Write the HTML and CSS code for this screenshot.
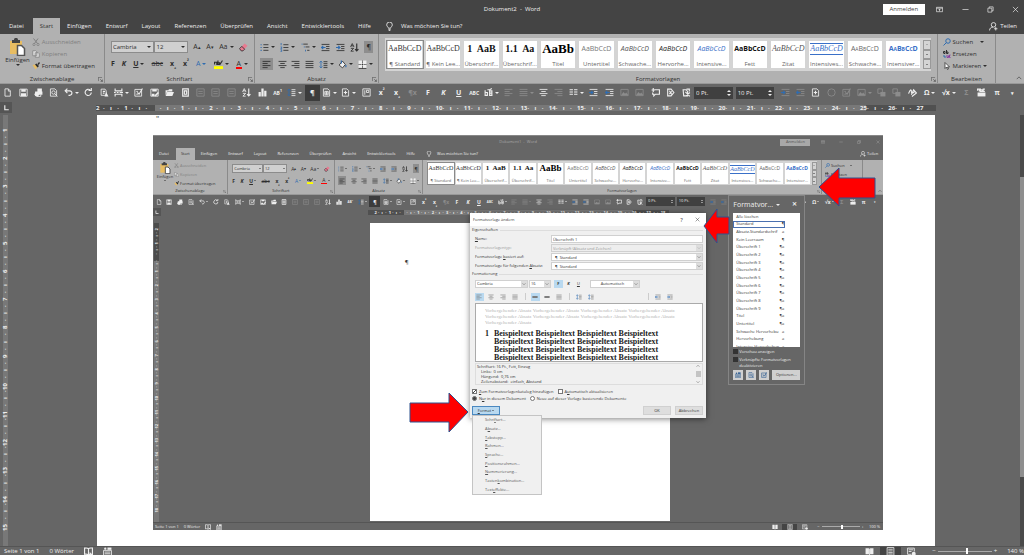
FILE: index.html
```html
<!DOCTYPE html>
<html lang="de">
<head>
<meta charset="utf-8">
<title>Dokument2 - Word</title>
<link rel="stylesheet" href="styles.css">
</head>
<body>
<svg class="sprite" aria-hidden="true">
  <symbol id="new" viewBox="0 0 16 16"><path d="M3.5 1.5h6l3.5 3.5v9.5h-9.5zM9.500 1.500v4h3.500"/></symbol>
  <symbol id="save" viewBox="0 0 16 16"><path d="M1.500 2h13v12.500h-13z"/><path class="f" d="M4 2h8v4.500H4zM3.500 9.500h9v5h-9z"/></symbol>
  <symbol id="print" viewBox="0 0 16 16"><path class="f" d="M6 1h8v5H6zM2 6h13v6H2z"/><path d="M5 12v3h7v-3"/><circle class="f" cx="5" cy="11" r="4"/></symbol>
  <symbol id="preview" viewBox="0 0 16 16"><path d="M2.500 1.500h8l3 3v10h-11z"/><circle cx="8" cy="8" r="3"/><path d="M10 10l5 5"/></symbol>
  <symbol id="undo" viewBox="0 0 16 16"><path class="w" d="M2 5h8c6 0 5 8 0 8H8M6 1L2 5l4 4"/></symbol>
  <symbol id="redo" viewBox="0 0 16 16"><path class="w" d="M13 8a5.500 5.500 0 1 1-2-4.500M8 4.500h5V0"/></symbol>
  <symbol id="pasteas" viewBox="0 0 16 16"><path d="M2 2h7l2 3v8H2z"/><path class="w" d="M5 6h4M5 9h3"/><path class="f" d="M8 15l3-8 4 8z"/></symbol>
  <symbol id="break" viewBox="0 0 16 16"><path class="w" d="M2 1v4h12V1M2 15v-4h12v4M0 8h3M5 8h3M10 8h6"/></symbol>
  <symbol id="check" viewBox="0 0 16 16"><path d="M1.500 2.500h12v12h-12zM4 6h3M4 11h3"/><path class="w" d="M6 8l3 3 6-10"/></symbol>
  <symbol id="saveas" viewBox="0 0 16 16"><path d="M1.500 2h13v12.500h-13z"/><path class="f" d="M4 2h8v4H4zM3 10h5v4H3zM8 13l6-6 2 2-6 6z"/></symbol>
  <symbol id="open" viewBox="0 0 16 16"><path class="f" d="M1 4h5l1-2h6v4H4l-3 7zM4 7h12l-3 7H1z"/></symbol>
  <symbol id="page" viewBox="0 0 16 16"><path class="w" d="M3 1.500h10v13H3zM6 5h4v6H6z"/></symbol>
  <symbol id="frame" viewBox="0 0 16 16"><path d="M1.500 1.500h13v13h-13zM4 6h8M4 10h8"/></symbol>
  <symbol id="sort" viewBox="0 0 16 16"><path d="M1 7l3-6 3 6M2 5h4M1.500 9.500h5l-5 5h5"/><path class="w" d="M12 1v13M9 11l3 3 3-3"/></symbol>
  <symbol id="chart" viewBox="0 0 16 16"><path class="f" d="M1 7h4v8H1zM6 1h4v14H6zM11 5h4v10h-4z"/></symbol>
  <symbol id="spacing" viewBox="0 0 16 16"><path class="b" d="M3.500 2v12M1 4.500L3.500 2 6 4.500M1 11.500L3.500 14 6 11.500"/><path d="M8 3h7M8 6.500h7M8 10h7M8 13.500h7"/></symbol>
  <symbol id="grid" viewBox="0 0 16 16"><path d="M2.500 1.500h8l3 3v10h-11zM5 6h6v6H5zM8 6v6M5 9h6"/></symbol>
  <symbol id="docplus" viewBox="0 0 16 16"><path d="M2.500 1.500h8l3 3v10h-11z"/><path class="w" d="M8 5v6M5 8h6"/></symbol>
  <symbol id="box" viewBox="0 0 16 16"><path d="M1.500 1.500h13v13h-13zM5 4v8M8 4v4h4V4z"/></symbol>
  <symbol id="left" viewBox="0 0 16 16"><path d="M1 2.500h14M1 6.200h9M1 9.900h14M1 13.500h9"/></symbol>
  <symbol id="center" viewBox="0 0 16 16"><path d="M1 2.500h14M4 6.200h8M1 9.900h14M4 13.500h8"/></symbol>
  <symbol id="right" viewBox="0 0 16 16"><path d="M1 2.500h14M6 6.200h9M1 9.900h14M6 13.500h9"/></symbol>
  <symbol id="just" viewBox="0 0 16 16"><path d="M1 2.500h14M1 6.200h14M1 9.900h14M1 13.500h14"/></symbol>
  <symbol id="cols" viewBox="0 0 16 16"><path class="w" d="M1 3h6M9 3h6M1 7h6M9 7h6M1 11h6M9 11h6"/></symbol>
  <symbol id="outdent" viewBox="0 0 16 16"><path d="M1 2.500h14M9 6.200h6M9 9.900h6M1 13.500h14"/><path class="b w" d="M8 8H1M4 5L1 8l3 3"/></symbol>
  <symbol id="indent" viewBox="0 0 16 16"><path d="M1 2.500h14M9 6.200h6M9 9.900h6M1 13.500h14"/><path class="b w" d="M0 8h7M4 5l3 3-3 3"/></symbol>
  <symbol id="image" viewBox="0 0 16 16"><path d="M1.500 2.500h13v11h-13z"/><path class="f" d="M2 13l4-6 3 3 2-2 4 5z"/></symbol>
  <symbol id="comment" viewBox="0 0 16 16"><path class="w" d="M6 3h9v8H8l-3 3v-3H3V8M4 0v7M1 3.500h6"/></symbol>
  <symbol id="tag" viewBox="0 0 16 16"><path class="w" d="M3 2h6l5 6-5 6H3zM6 5l4 6M10 6l-4 5"/></symbol>
  <symbol id="copyfmt" viewBox="0 0 16 16"><path class="w" d="M2 3h5l3 3v8H3zM8 2h5v4M6 7l8 8M14 8l-7 6"/></symbol>
  <symbol id="circle" viewBox="0 0 16 16"><circle cx="8" cy="8" r="6.500"/></symbol>
  <symbol id="group" viewBox="0 0 16 16"><path d="M1.500 1.500h8v8h-8z"/><path class="f" d="M6 7h9v8H6z"/></symbol>
  <symbol id="spell" viewBox="0 0 16 16"><path class="w" d="M1 10c3-8 5-8 5-4s2 5 6 0M6 12l4-9 5 6-8 6"/></symbol>
  <symbol id="bformat" viewBox="0 0 16 16"><path class="w" d="M2 4v9h4V8H2M10 5h4v8h-4zM10 9h4M6 3h4l4-2"/></symbol>
  <symbol id="abc" viewBox="0 0 16 16"><path class="f" d="M1 8h14v7H1z"/><path class="w" d="M1 5V2h3v4M6 1v5h3V3H6M14 2h-3v4h3"/></symbol>
  <symbol id="tabstop" viewBox="0 0 16 16"><path class="w" d="M5 4v8h7"/></symbol>
  <symbol id="bulb" viewBox="0 0 16 16"><path d="M6 11c0-2-3-3-3-6a5 5 0 0 1 10 0c0 3-3 4-3 6zM6 13h4M6.500 15h3"/></symbol>
  <symbol id="person" viewBox="0 0 16 16"><circle cx="8" cy="5" r="4"/><path d="M1 15c0-4 3-6 6-6M9 12h6M12 9v6"/></symbol>
  <symbol id="paste" viewBox="0 0 16 18"><path fill="#e8bd62" stroke="none" d="M1 3h12v13H1z"/><path fill="#444" stroke="none" d="M3 2h2c0-3 4-3 4 0h2v3H3z"/><path fill="#fff" stroke="#555" d="M8.500 7.500h4l3 3v7h-7z"/></symbol>
  <symbol id="cut" viewBox="0 0 16 16"><path class="w" d="M3 1l8 10M12 1L5 11"/><circle cx="4" cy="13" r="2.300"/><circle cx="12" cy="13" r="2.300"/></symbol>
  <symbol id="copy" viewBox="0 0 16 16"><path fill="#ddd" d="M1.500 1.500h6l2 2v8h-8zM6.500 5.500h6l2 2v7h-8z"/></symbol>
  <symbol id="brush" viewBox="0 0 16 16"><path fill="#e8bd62" stroke="none" d="M1 6l5-1 5 5-4 5z"/><path class="f" d="M6 5l3-2 5 5-3 3zM11 4l3-4 2 2-3 4z"/></symbol>
  <symbol id="eraser" viewBox="0 0 16 16"><path fill="#e87a90" stroke="none" d="M1 10l9-9 5 4-8 9H4z"/><path d="M1 10l3 4h3l3-3-5-5z"/></symbol>
  <symbol id="bullets" viewBox="0 0 16 16"><path class="b w" d="M1 3h2M1 8h2M1 13h2"/><path d="M6 3h9M6 8h9M6 13h9"/></symbol>
  <symbol id="numbers" viewBox="0 0 16 16"><path class="b" d="M2 0v4M1 7h2v3H1M1 12h2v3H1"/><path d="M6 3h9M6 8h9M6 13h9"/></symbol>
  <symbol id="levels" viewBox="0 0 16 16"><path class="b" d="M1 2h2M5 7h2M8 12v3"/><path d="M4 2h8M8 7h7M11 13h4"/></symbol>
  <symbol id="fill" viewBox="0 0 16 16"><path fill="#eee" d="M2 9l6-7 5 6-5 6z"/><path class="b w" d="M14 9v4M6 1v5"/></symbol>
  <symbol id="borders" viewBox="0 0 16 16"><path fill="#eee" stroke="none" d="M1 1h14v14H1z"/><path stroke-dasharray="2 1" d="M8 1v14M1 8h14"/><path d="M1 15h14"/></symbol>
  <symbol id="marker" viewBox="0 0 16 16"><path fill="#ffff00" stroke="none" d="M0 11h16v5H0z"/><path class="w" d="M1 8V4h4v5M7 1v7h3V5H7M10 9l5-8"/></symbol>
  <symbol id="find" viewBox="0 0 16 16"><circle class="b w" cx="10" cy="6" r="4.500"/><path class="b w" d="M7 9l-6 6"/></symbol>
  <symbol id="swap" viewBox="0 0 16 16"><path class="w" d="M1 6V3h3v4H1M7 0v7h3V4H7"/><path class="b w" d="M2 10v4h4"/><path stroke="#8a3fa0" class="w" d="M8 10v5h3v-4M15 10h-2v5h2"/></symbol>
  <symbol id="cursor" viewBox="0 0 16 16"><path fill="#fff" d="M4 1v12l3-3 2 5 2-1-2-4h4z"/></symbol>
  <symbol id="launch" viewBox="0 0 16 16"><path d="M1 13V1h12M7 7l7 7M14 8v6H8"/></symbol>
  <symbol id="ribbonopt" viewBox="0 0 16 16"><path d="M1 3h14v10H1zM1 5h14M8 12V7M6 9l2-2 2 2"/></symbol>
  <symbol id="min" viewBox="0 0 16 16"><path d="M1 8h14"/></symbol>
  <symbol id="max" viewBox="0 0 16 16"><path d="M2 5h9v9H2zM5 5V2h9v9h-3"/></symbol>
  <symbol id="close" viewBox="0 0 16 16"><path d="M2 2l12 12M14 2L2 14"/></symbol>
  <symbol id="chev" viewBox="0 0 16 16"><path d="M2 5l6 6 6-6"/></symbol>
  <symbol id="up" viewBox="0 0 16 16"><path d="M2 11l6-6 6 6"/></symbol>
  <symbol id="book" viewBox="0 0 16 16"><path class="w" d="M8 3C5 1 2 2 1 2v11c3-1 5 0 7 1 2-1 4-2 7-1V2c-2 0-5-1-7 1zM8 3v11M10 10l5 5"/></symbol>
  <symbol id="read" viewBox="0 0 16 16"><path class="f" d="M1 2h6v11H1zM9 2h6v11H9z"/><path d="M8 3v12"/></symbol>
  <symbol id="layout" viewBox="0 0 16 16"><path d="M2 1h12v14H2zM4 4h8M4 7h8M4 10h8M4 12.500h8"/></symbol>
  <symbol id="web" viewBox="0 0 16 16"><path d="M1 2h12v6M1 2v11h7M3 5h8M3 8h5"/><circle class="f" cx="12" cy="12" r="3.500"/></symbol>
  <symbol id="macro" viewBox="0 0 16 16"><circle class="f" cx="4" cy="3" r="2"/><path class="f" d="M8 1h7v4H8z"/><path d="M1 6h14v9H1zM3 9h10M3 12h10"/></symbol>
</svg>

<template id="head">
  <header class="title"><span class="name"></span>
    <button class="login">Anmelden</button>
    <div class="wbtns">
      <button aria-label="Menüband-Anzeigeoptionen"><svg><use href="#ribbonopt"/></svg></button>
      <button aria-label="Minimieren"><svg><use href="#min"/></svg></button>
      <button aria-label="Verkleinern"><svg><use href="#max"/></svg></button>
      <button aria-label="Schließen"><svg><use href="#close"/></svg></button>
    </div>
  </header>
  <nav class="tabs">
    <button>Datei</button><button class="on">Start</button><button>Einfügen</button><button>Entwurf</button><button>Layout</button><button>Referenzen</button><button>Überprüfen</button><button>Ansicht</button><button>Entwicklertools</button><button>Hilfe</button><button class="tell"><svg><use href="#bulb"/></svg>Was möchten Sie tun?</button>
    <button class="share"><svg><use href="#person"/></svg>Teilen</button>
  </nav>
  <div class="ribbon">
    <section class="group">
      <div class="clip">
        <button class="big"><svg><use href="#paste"/></svg>Einfügen<i class="dd"></i></button>
        <div class="stack">
          <button class="off"><svg><use href="#cut"/></svg>Ausschneiden</button>
          <button class="off"><svg><use href="#copy"/></svg>Kopieren</button>
          <button><svg><use href="#brush"/></svg>Format übertragen</button>
        </div>
      </div>
      <footer>Zwischenablage<svg><use href="#launch"/></svg></footer>
    </section>
    <section class="group">
      <div class="rows">
        <div class="line">
          <div class="combos"><label class="pick wide"><select aria-label="Schriftart"><option>Cambria</option></select><i class="dd"></i></label><label class="pick"><select aria-label="Schriftgrad"><option>12</option></select><i class="dd"></i></label></div>
          <button>A<sup>▴</sup></button><button>A<sup>▾</sup></button><button>Aa<i class="dd"></i></button><button aria-label="Formatierung löschen"><svg><use href="#eraser"/></svg></button>
        </div>
        <div class="line">
          <button><b>F</b></button><button><b><em>K</em></b></button><button><b><u>U</u></b><i class="dd"></i></button><button><s>abc</s></button><button><b>x<sub>₂</sub></b></button><button><b>x<sup>²</sup></b></button><button class="glow">A<i class="dd"></i></button><button aria-label="Texthervorhebung"><svg><use href="#marker"/></svg><i class="dd"></i></button><button><span class="red">A</span><i class="dd"></i></button>
        </div>
      </div>
      <footer>Schriftart<svg><use href="#launch"/></svg></footer>
    </section>
    <section class="group">
      <div class="rows">
        <div class="line">
          <button aria-label="Aufzählung"><svg><use href="#bullets"/></svg><i class="dd"></i></button><button aria-label="Nummerierung"><svg><use href="#numbers"/></svg><i class="dd"></i></button><button aria-label="Liste"><svg><use href="#levels"/></svg><i class="dd"></i></button><button aria-label="Einzug verkleinern"><svg><use href="#outdent"/></svg></button><button aria-label="Einzug vergrößern"><svg><use href="#indent"/></svg></button><button aria-label="Sortieren"><svg><use href="#sort"/></svg></button><button class="on">¶</button>
        </div>
        <div class="line">
          <button class="on" aria-label="Linksbündig"><svg><use href="#left"/></svg></button><button aria-label="Zentriert"><svg><use href="#center"/></svg></button><button aria-label="Rechtsbündig"><svg><use href="#right"/></svg></button><button aria-label="Blocksatz"><svg><use href="#just"/></svg></button><button aria-label="Zeilenabstand"><svg><use href="#spacing"/></svg><i class="dd"></i></button><button aria-label="Schattierung"><svg><use href="#fill"/></svg><i class="dd"></i></button><button aria-label="Rahmen"><svg><use href="#borders"/></svg><i class="dd"></i></button>
        </div>
      </div>
      <footer>Absatz<svg><use href="#launch"/></svg></footer>
    </section>
    <section class="group">
      <div class="gallery">
        <button class="tile on"><span class="pv serif">AaBbCcD</span>¶ Standard</button>
        <button class="tile"><span class="pv serif">AaBbCcD</span>¶ Kein Lee...</button>
        <button class="tile"><span class="pv h">1&nbsp; AaB</span>Überschrif...</button>
        <button class="tile"><span class="pv h">1.1&nbsp; Aa</span>Überschrif...</button>
        <button class="tile"><span class="pv t">AaBb</span>Titel</button>
        <button class="tile"><span class="pv gray">AaBbCcD</span>Untertitel</button>
        <button class="tile"><span class="pv it">AaBbCcD</span>Schwache...</button>
        <button class="tile"><span class="pv it dark">AaBbCcD</span>Hervorhe...</button>
        <button class="tile"><span class="pv it blue">AaBbCcD</span>Intensive...</button>
        <button class="tile"><span class="pv bold">AaBbCcD</span>Fett</button>
        <button class="tile"><span class="pv serif it">AaBbCcD</span>Zitat</button>
        <button class="tile"><span class="pv serif it blue lined">AaBbCcD</span>Intensives...</button>
        <button class="tile"><span class="pv caps">AaBbCcD</span>Schwache...</button>
        <button class="tile"><span class="pv caps bold blue">AaBbCcD</span>Intensiver...</button>
        <div class="scroller"><button aria-label="Nach oben" class="off"><i class="dd flip"></i></button><button aria-label="Nach unten"><i class="dd"></i></button><button aria-label="Mehr"><i class="dd"></i></button></div>
      </div>
      <footer>Formatvorlagen<svg><use href="#launch"/></svg></footer>
    </section>
    <section class="group">
      <div class="stack edit">
        <button><svg><use href="#find"/></svg>Suchen <i class="dd far"></i></button>
        <button><svg><use href="#swap"/></svg>Ersetzen</button>
        <button><svg><use href="#cursor"/></svg>Markieren<i class="dd"></i></button>
      </div>
      <footer>Bearbeiten</footer>
    </section>
    <section class="group last"><button aria-label="Menüband reduzieren"><svg><use href="#up"/></svg></button></section>
  </div>
  <div class="qat"></div>
</template>

<template id="foot">
  <footer class="status"><span>Seite 1 von 1</span><span>0 Wörter</span><svg><use href="#book"/></svg><svg><use href="#macro"/></svg>
    <div class="views"><button aria-label="Lesemodus"><svg><use href="#read"/></svg></button><button class="on" aria-label="Seitenlayout"><svg><use href="#layout"/></svg></button><button aria-label="Weblayout"><svg><use href="#web"/></svg></button></div>
    <div class="zoom"><span>−</span><input type="range" aria-label="Zoom" min="0" max="100" value="55"><span>+</span></div><span class="pct"></span>
  </footer>
</template>

<main class="word outer" data-name="Dokument2  -  Word" data-zoom="140 %" data-cm="27" data-v="15">
  <div class="desk">
    <div class="page">
      <div class="mark">"</div>
      <div class="shot">
        <div class="word inner" data-name="Dokument1  -  Word" data-zoom="100 %" data-cm="18" data-v="18">
          <div class="desk"><div class="page"><p>¶</p></div></div>
        </div>

        <aside class="pane">
          <h2>Formatvor... <i class="dd"></i><button aria-label="Schließen"><b>✕</b></button></h2>
          <ul>
            <li>Alle löschen</li><li class="on">Standard<span>¶</span></li><li>Absatz-Standardschrif<span>a</span></li><li>Kein Leerraum<span>¶</span></li>
            <li>Überschrift 1<span>¶a</span></li><li>Überschrift 2<span>¶a</span></li><li>Überschrift 3<span>¶a</span></li><li>Überschrift 4<span>¶a</span></li><li>Überschrift 5<span>¶a</span></li><li>Überschrift 6<span>¶a</span></li><li>Überschrift 7<span>¶a</span></li><li>Überschrift 8<span>¶a</span></li><li>Überschrift 9<span>¶a</span></li>
            <li>Titel<span>¶a</span></li><li>Untertitel<span>¶a</span></li><li>Schwache Hervorhebu<span>a</span></li><li>Hervorhebung<span>a</span></li><li>Intensive Hervorhebun<span>a</span></li>
          </ul>
          <label><input type="checkbox">Vorschau anzeigen</label>
          <label><input type="checkbox">Verknüpfte Formatvorlagen deaktivieren</label>
          <div class="acts"><button aria-label="Neue Formatvorlage"><svg><use href="#macro"/></svg></button><button aria-label="Formatinspektor"><svg><use href="#preview"/></svg></button><button aria-label="Formatvorlagen verwalten"><svg><use href="#check"/></svg></button><button class="opt">Optionen...</button></div>
        </aside>

        <form class="dialog" aria-label="Formatvorlage ändern">
          <header>Formatvorlage ändern<span>?</span><svg><use href="#close"/></svg></header>
          <h3>Eigenschaften</h3>
          <div class="fields">
            <label for="nm"><u>N</u>ame:</label><div class="pick"><input id="nm" value="Überschrift 1"></div>
            <label for="ty" class="off">Formatvorlagentyp:</label><div class="pick off"><select id="ty" disabled><option>Verknüpft (Absatz und Zeichen)</option></select><svg><use href="#chev"/></svg></div>
            <label for="ba">Formatvorlage <u>b</u>asiert auf:</label><div class="pick"><select id="ba"><option>&nbsp; ¶&nbsp; Standard</option></select><svg><use href="#chev"/></svg></div>
            <label for="fo">Formatvorlage für folgenden <u>A</u>bsatz:</label><div class="pick"><select id="fo"><option>&nbsp; ¶&nbsp; Standard</option></select><svg><use href="#chev"/></svg></div>
          </div>
          <h3>Formatierung</h3>
          <div class="fmt">
            <div class="pick f1"><select aria-label="Schriftart"><option>Cambria</option></select><svg><use href="#chev"/></svg></div>
            <div class="pick f2"><select aria-label="Schriftgrad"><option>16</option></select><svg><use href="#chev"/></svg></div>
            <button type="button" class="on"><b>F</b></button><button type="button"><b><em>K</em></b></button><button type="button"><u>U</u></button>
            <div class="pick f3"><select aria-label="Schriftfarbe"><option>Automatisch</option></select><svg><use href="#chev"/></svg></div>
          </div>
          <div class="fmt aligns">
            <button type="button" class="on" aria-label="Linksbündig"><svg><use href="#left"/></svg></button><button type="button" aria-label="Zentriert"><svg><use href="#center"/></svg></button><button type="button" aria-label="Rechtsbündig"><svg><use href="#right"/></svg></button><button type="button" aria-label="Blocksatz"><svg><use href="#just"/></svg></button>
            <hr><button type="button" class="on" aria-label="Einfach"><svg class="hv"><use href="#min"/></svg></button><button type="button" aria-label="Eineinhalb"><svg class="hv"><use href="#min"/></svg></button><button type="button" aria-label="Doppelt"><svg><use href="#just"/></svg></button>
            <hr><button type="button" aria-label="Abstand größer"><svg><use href="#spacing"/></svg></button><button type="button" aria-label="Abstand kleiner"><svg><use href="#spacing"/></svg></button>
            <hr class="push"><button type="button" aria-label="Einzug verkleinern"><svg><use href="#outdent"/></svg></button><button type="button" aria-label="Einzug vergrößern"><svg><use href="#indent"/></svg></button>
          </div>
          <div class="sample">
            <p>Vorhergehender Absatz Vorhergehender Absatz Vorhergehender Absatz Vorhergehender Absatz Vorhergehender Absatz Vorhergehender Absatz Vorhergehender Absatz Vorhergehender Absatz Vorhergehender Absatz</p>
            <div><b>1</b><b>Beispieltext Beispieltext Beispieltext Beispieltext<br>Beispieltext Beispieltext Beispieltext Beispieltext<br>Beispieltext Beispieltext Beispieltext Beispieltext<br>Beispieltext Beispieltext Beispieltext Beispieltext</b></div>
          </div>
          <div class="desc"><div>Schriftart: 16 Pt., Fett, Einzug<p>Links:&nbsp; 0 cm<br>Hängend:&nbsp; 0,76 cm<br>Zeilenabstand:&nbsp; einfach, Abstand</p></div><div class="sb"><svg><use href="#up"/></svg><i></i><svg><use href="#chev"/></svg></div></div>
          <div class="opts"><label><input type="checkbox" checked><span><u>Z</u>um Formatvorlagenkatalog hinzufügen</span></label><label><input type="checkbox"><span>A<u>u</u>tomatisch aktualisieren</span></label></div>
          <div class="opts"><label><input type="radio" name="scope" checked><span>N<u>u</u>r in diesem Dokument</span></label><label><input type="radio" name="scope"><span>Neue auf dieser Vorlage basierende Dokumente</span></label></div>
          <div class="btns"><button type="button" class="on"><u>F</u>ormat<i class="dd"></i></button><button type="button">OK</button><button type="button">Abbrechen</button></div>
        </form>

        <menu class="drop">
          <li><button>Schri<u>f</u>tart...</button></li><li><button>A<u>b</u>satz...</button></li><li><button><u>T</u>abstopp...</button></li><li><button><u>R</u>ahmen...</button></li><li><button><u>S</u>prache...</button></li><li><button><u>P</u>ositionsrahmen...</button></li><li><button><u>N</u>ummerierung...</button></li><li><button>Tasten<u>k</u>ombination...</button></li><li><button>Text<u>e</u>ffekte...</button></li>
        </menu>

        <svg class="arrow a1" viewBox="0 0 58 40"><path d="M1 20L21 1v10h36v20H21v8z"/></svg>
        <svg class="arrow a2" viewBox="0 0 27 36"><path d="M1 18L14 1v8h12v17H14v9z"/></svg>
        <svg class="arrow a3" viewBox="0 0 60 41"><path d="M59 20L40 1v10H1v19h39v10z"/></svg>
      </div>
    </div>
  </div>
</main>
<script src="app.js"></script>
</body>
</html>
```

FILE: app.js
```js
// Quick access toolbar: [content, label, flags]; "#x" is an icon,
// flags: + drop-down, ~ disabled, ! active, s small text, n number box
const TOOLS = [
  ['#new', 'Neu'], ['#save', 'Speichern'], ['#print', 'Drucken'], ['#preview', 'Seitenansicht'],
  ['#undo', 'Rückgängig', '+'], ['#redo', 'Wiederholen'], ['#pasteas', 'Inhalte einfügen'], ['#break', 'Umbrüche', '+'],
  ['#check', 'Prüfen'], ['#saveas', 'Speichern unter'], ['#open', 'Öffnen'], ['#page', 'Seite'],
  ['#frame', 'Rahmen links', '~'], ['#frame', 'Rahmen Mitte', '~'], ['#frame', 'Rahmen rechts', '~'],
  ['#sort', 'Sortieren'], ['#chart', 'Diagramm'], ['AB<sup>1</sup>', 'Fußnote', 's'], ['#spacing', 'Zeilenabstand', '+'],
  ['¶', 'Absatzmarken', '!'], ['#grid', 'Tabelle', '+'], ['#docplus', 'Deckblatt', '+'], ['#box', 'Textfeld'],
  ['x<sup>²</sup>', 'Hochgestellt'], ['x<sub>₂</sub>', 'Tiefgestellt'], ['¶x', 'Löschen', '~'],
  ['F', 'Fett'], ['<em>K</em>', 'Kursiv'], ['<u>U</u>', 'Unterstrichen'], ['ABC', 'Kapitälchen', 's'], ['#bformat', 'Format', '+'],
  ['#left', 'Links', '~'], ['#just', 'Block', '~+'], ['#center', 'Zentriert'], ['#right', 'Rechts', '~'], ['#cols', 'Spalten', '+'],
  ['#indent', 'Einzug vergrößern'], ['#outdent', 'Einzug verkleinern'], ['#image', 'Bild', '~'], ['#image', 'Grafik', '~'],
  ['#comment', 'Kommentar'], ['#tag', 'Etikett'], ['#copyfmt', 'Format kopieren'],
  ['0 Pt.', 'Abstand vor', 'n'], ['10 Pt.', 'Abstand nach', 'n'],
  ['#indent', 'Einzug links', '~'], ['#outdent', 'Einzug rechts', '~'], ['#docplus', 'Dokumentteil'], ['#circle', 'Form', '~'],
  ['#check', 'Freigeben', '~'], ['#image', 'Bildformat', '~+'], ['#group', 'Nach vorne', '~'], ['#group', 'Nach hinten', '~'],
  ['#spell', 'Rechtschreibung'], ['Ω', 'Symbol', '+'], ['√x', 'Formel', '+'], ['Σ', 'Summe', '~'], ['#abc', 'Silbentrennung'],
  ['π', 'Gleichung'], ['▾', 'Anpassen', 's']
];

function tool([what, label, flags = '']) {
  if (flags.includes('n')) {
    return `<label class="num"><input aria-label="${label}" value="${what}"><span><i class="dd flip"></i><i class="dd"></i></span></label>`;
  }
  const cls = ['tool'];
  if (flags.includes('+')) cls.push('split');
  if (flags.includes('~')) cls.push('off');
  if (flags.includes('!')) cls.push('on');
  if (flags.includes('s')) cls.push('small');
  const body = what[0] === '#' ? `<svg><use href="${what}"/></svg>` : `<b>${what}</b>`;
  return `<button class="${cls.join(' ')}" aria-label="${label}">${body}${flags.includes('+') ? '<i class="dd"></i>' : ''}</button>`;
}

function cells(from, to) {
  let out = '';
  for (let n = from; n <= to; n++) {
    const ticks = n < to ? '<span>·</span><span>ı</span><span>·</span>' : '<span></span><span></span><span></span>';
    out += `<li><span>${n === 0 ? '' : Math.abs(n)}</span>${ticks}</li>`;
  }
  return out;
}

document.querySelectorAll('.word').forEach(win => {
  const { name, zoom, cm, v } = win.dataset;
  const head = document.getElementById('head').content.cloneNode(true);
  head.querySelector('.name').textContent = name;
  head.querySelector('.qat').innerHTML = TOOLS.map(tool).join('');
  win.prepend(head);

  const desk = win.querySelector(':scope > .desk');
  desk.insertAdjacentHTML('beforebegin',
    `<div class="rulerrow"><button class="stop" aria-label="Tabstopp"><svg><use href="#tabstop"/></svg></button><ol class="ruler">${cells(-2, +cm)}</ol></div>`);
  desk.insertAdjacentHTML('afterbegin',
    `<ol class="vruler">${cells(win.classList.contains('inner') ? -2 : 1, +v)}</ol>`);

  const foot = document.getElementById('foot').content.cloneNode(true);
  foot.querySelector('.pct').textContent = zoom;
  win.append(foot);
});
document.querySelector('.outer > .desk').insertAdjacentHTML('beforeend', '<div class="vscroll"><i></i></div>');
```

FILE: styles.css
```css
* { box-sizing: border-box; margin: 0; padding: 0; }
body { height: 100vh; overflow: hidden; font-family: "Open Sans", "Noto Sans", sans-serif; }
.sprite { display: none; }
ol, ul, menu { list-style: none; }
button, input, select { font: inherit; color: inherit; background: none; border: 0; appearance: none; border-radius: 0; }
button { display: inline-flex; align-items: center; justify-content: center; white-space: nowrap; }
svg { fill: none; stroke: currentColor; stroke-width: 1.5; width: var(--ico); height: var(--ico); flex: none; }
.f { fill: currentColor; stroke: none; }
.w { stroke-width: 2; }
sup, sub { font-size: 0.7em; line-height: 0; }
.dd { display: inline-block; width: 0; height: 0; border: var(--dd) solid transparent; border-top-color: currentColor; border-bottom: 0; margin-left: var(--dd); flex: none; }
.dd.flip { transform: rotate(180deg); }

.word { display: flex; flex-direction: column; background: #666; color: #eee; font-size: var(--fs); line-height: var(--lh); overflow: hidden; }
.outer { --fs: 6px; --lh: 8px; --ico: 9px; --dd: 2px; --title: 18px; --tabs: 16px; --tg: 0px; --ribbon: 50px; --qat: 18px; --rr: 11px; --row: 12px; --pad: 7px; --pv: 7px; --pvs: 8px; --h: 10px; --t: 13px; --g: 2px; --st: 9px; --top: 5px; --gap: 5px; --bar: #444; height: 100vh; }
.inner { --fs: 4px; --lh: 6px; --ico: 6px; --dd: 1px; --title: 12px; --tabs: 12px; --tg: 1px; --ribbon: 35px; --qat: 13px; --rr: 8px; --row: 9px; --pad: 5px; --pv: 5px; --pvs: 6px; --h: 7px; --t: 9px; --g: 1px; --st: 8px; --top: 3px; --gap: 3px; --bar: #666; height: 100%; }

.title { height: var(--title); flex: none; background: var(--bar); display: grid; grid-template-columns: 1fr auto 9%; align-items: center; }
.title .name { grid-column: 1 / -1; grid-row: 1; text-align: center; white-space: pre; }
.inner .title { color: #a8a8a8; }
.login { grid-column: 2; grid-row: 1; background: #fff; color: #444; width: 42px; height: 11px; margin-right: 7px; }
.inner .login { width: 30px; height: 7px; background: #a8a8a8; color: #555; }
.wbtns { grid-column: 3; grid-row: 1; display: flex; justify-content: space-between; padding: 0 5%; }
.wbtns svg { width: calc(var(--ico) - 2px); height: calc(var(--ico) - 2px); }

.tabs { height: var(--tabs); flex: none; background: var(--bar); display: flex; gap: var(--tg); padding-left: var(--g); }
.tabs button { padding: 0 var(--pad); }
.tabs .on { background: #b1b1b1; color: #333; margin-left: var(--g); }
.tell svg { margin-right: var(--pad); }
.tabs .share { margin-left: auto; }
.share svg { margin-right: var(--g); }

.ribbon { height: var(--ribbon); flex: none; background: #b1b1b1; color: #2e2e2e; display: grid; grid-template-columns: 105fr 150fr 124fr 559fr 58fr 28fr; border-bottom: 1px solid #999; }
.group { border-right: 1px solid #8a8a8a; display: flex; flex-direction: column; min-width: 0; overflow: hidden; padding-top: var(--g); }
.group > footer { margin-top: auto; text-align: center; position: relative; }
.group > footer svg { position: absolute; right: 1px; bottom: 1px; width: calc(var(--fs) - 1px); height: calc(var(--fs) - 1px); }
.group.last { border: 0; justify-content: flex-end; align-items: flex-end; padding: var(--g); }
.last svg { width: var(--fs); height: var(--fs); }
.ribbon .off { color: #808080; }
.b { stroke: #2f6cb0; }
.qat .b { stroke: currentColor; }
.clip { display: flex; gap: var(--g); padding-left: 5%; }
.big { flex-direction: column; line-height: var(--lh); align-self: flex-start; padding-top: var(--g); }
.big svg { width: calc(var(--ico) + var(--ico)); height: calc(var(--ico) + var(--ico)); }
.stack { display: grid; grid-auto-rows: var(--row); justify-items: start; }
.stack svg { margin-right: var(--g); width: calc(var(--ico) - 1px); height: calc(var(--ico) - 1px); }
.edit { padding-left: 8%; }
.far { margin-left: var(--pad); }
.rows { display: grid; grid-auto-rows: var(--row); row-gap: var(--gap); padding: var(--top) 4% 0; }
.line { display: flex; justify-content: space-between; align-items: center; font-size: calc(var(--fs) + 1px); }
.line .on { background: #8e8e8e; padding: var(--g); }
.line button { height: var(--row); }
.pick { display: flex; align-items: center; background: #d0d0d0; border: 1px solid #8c8c8c; min-width: 0; }
.combos { display: flex; width: 56%; height: var(--row); font-size: var(--fs); }
.combos .pick { flex: 33; padding: 0 var(--dd) 0 1px; }
.combos .wide { flex: 45; }
.pick select, .pick input { flex: 1; min-width: 0; width: 0; height: 100%; outline: 0; }
.glow { color: #2f6cb0; }
.red { border-bottom: var(--g) solid #f00; line-height: 1; padding: 0 1px; }
.gallery { display: flex; background: #d4d4d4; margin: var(--g) 1% 0 1%; padding: var(--g) 0 var(--g) 1px; height: 33px; }
.inner .gallery { height: 24px; padding: 1px 0 0; margin-top: 0; }
.tile { flex: 1 1 0; min-width: 0; background: #fff; background-clip: padding-box; border: solid #d4d4d4; border-width: 1px; flex-direction: column; color: #666; justify-content: space-between; }
.outer > .ribbon .tile { border-width: 1px 2px; }
.tile.on { outline: 1px solid #8a8a8a; outline-offset: -1px; z-index: 1; }
.pv { display: block; flex: 1; color: #333; font-size: var(--pv); line-height: calc(var(--row) + var(--g) + var(--g)); height: var(--row); }
.serif { font-family: "Liberation Serif", serif; font-size: var(--pvs); }
.h { font: bold var(--h) "Liberation Serif", serif; line-height: calc(var(--row) + var(--g) + var(--g)); color: #111; }
.t { font: bold var(--t) "Liberation Serif", serif; line-height: calc(var(--row) + var(--g) + var(--g)); color: #000; }
.gray { color: #777; }
.it { font-style: italic; color: #555; }
.dark { color: #222; }
.bold { font-weight: bold; color: #111; }
.caps { font-variant: small-caps; color: #666; }
.pv.blue { color: #3a70c8; }
.pv.lined { border: solid #3a70c8; border-width: 1px 0; line-height: 7px; flex: none; margin-top: 2px; height: 9px; }
.outer > .ribbon .pv.lined { line-height: 10px; height: 12px; }
.scroller { width: 8px; display: grid; margin-left: 1px; }
.inner .scroller { width: 5px; }
.scroller button { border: 1px solid #999; }
.scroller .dd { margin: 0; border-width: 1px; border-bottom: 0; }

.qat { height: var(--qat); flex: none; background: #666; display: flex; align-items: center; padding-right: 0.4%; font-size: calc(var(--fs) + 1px); }
.tool { flex: 4 1 0; min-width: 0; height: 88%; }
.tool.split { flex-grow: 5; }
.tool.on { background: #3c3c3c; }
.tool.small { font-size: calc(var(--fs) - 1px); }
.qat .off { color: #8c8c8c; }
.num { flex: 9 1 0; min-width: 0; display: flex; align-items: center; background: #404040; height: 62%; margin-right: 0.3%; font-size: var(--fs); padding: 0 2px; }
.num input { flex: 1; min-width: 0; width: 0; }
.num span { display: grid; gap: var(--g); }
.num .dd { margin: 0; }

.rulerrow { height: var(--rr); flex: none; display: flex; align-items: center; }
.stop { width: 12px; height: 100%; background: #555; }
.ruler { margin-left: 8.200%; width: 82%; display: flex; overflow: hidden; font-size: var(--fs); font-weight: bold; line-height: 6px; background: linear-gradient(90deg, #505050 7%, #787878 7% 91.700%, #505050 91.700%); }
.ruler li { flex: 0 0 3.370%; min-width: 0; display: flex; }
.ruler span { flex: 1 1 0; min-width: 0; width: 0; }
.inner .stop { width: 8px; }
.inner .ruler { margin-left: 28.400%; width: 41.200%; padding-left: 6px; line-height: 5px; background: linear-gradient(90deg, #505050 12%, #787878 12% 88%, #505050 88%); }
.inner .ruler li { flex-basis: 4.860%; }

.desk { flex: 1; min-height: 0; display: grid; grid-template-rows: minmax(0, 1fr); overflow: hidden; }
.outer > .desk { grid-template-columns: 9px 88fr 839fr 85fr 4px; padding-top: 2px; }
.inner > .desk { grid-template-columns: 7px 209fr 301fr 213fr; padding: 7px 0 0 1px; }
.desk > .page { grid-column: 3; background: #fff; min-width: 0; min-height: 0; }
.inner > .desk > .page { margin-bottom: 1px; }
.vruler { display: flex; flex-direction: column; grid-column: 1; grid-row: 1; width: 5px; margin-left: 3px; background: #787878; font-size: var(--fs); font-weight: bold; line-height: 5px; padding-top: 14px; min-height: 0; height: 437px; }
.vruler li { flex: 1 0 0; min-height: 0; display: flex; flex-direction: column; align-items: center; }
.vruler span { writing-mode: vertical-rl; transform: rotate(180deg); flex: 1 1 0; min-height: 0; height: 0; display: flex; justify-content: flex-end; }
.inner .vruler { margin: 0; padding-top: 5px; height: auto; background: linear-gradient(#4c4c4c 38px, #787878 38px); }
.vscroll { grid-column: 5; background: #4a4a4a; padding-top: 62px; }
.vscroll i { display: block; height: 300px; background: #8e8e8e; }

.status { height: var(--st); flex: none; display: flex; align-items: center; gap: var(--pad); padding: 0 3px 0 2px; font-size: var(--fs); border-top: 1px solid #555; line-height: 6px; }
.outer > .status { line-height: 7px; padding: 0 0 0 4px; gap: 10px; }
.views { margin-left: auto; display: flex; }
.views button { width: 15px; }
.outer > .status .views button { width: 21px; }
.views .on { background: #444; }
.zoom { display: flex; align-items: center; gap: 2px; }
.status input { width: 38px; height: 5px; background: linear-gradient(#aaa, #aaa) center / 100% 1px no-repeat; }
.outer > .status input { width: 54px; height: 7px; }
.status input::-webkit-slider-thumb { appearance: none; width: 2px; height: 4px; background: #fff; }
.outer > .status input::-webkit-slider-thumb { height: 6px; }

.outer > .desk > .page { display: flex; flex-direction: column; padding: 0 6.200% 16px 6.700%; }
.mark { color: #444; height: 20px; flex: none; font-size: 8px; line-height: 6px; padding-left: 3px; }
.shot { position: relative; flex: 1; min-height: 0; color: #444; font-size: 4px; line-height: 6px; --dd: 1px; --ico: 6px; }
.shot .word { border-top: 1px solid #888; }
.inner .page { color: #333; padding: 36px 0 0 35px; font-size: 6px; }

.pane { position: absolute; left: 78.800%; top: 60px; width: 77px; height: 190px; background: #666; border: 1px solid #858585; color: #eee; padding: 4px; display: flex; flex-direction: column; }
.pane h2 { font-size: 7px; font-weight: normal; line-height: 9px; display: flex; align-items: center; }
.pane h2 .dd { border-width: 2px 2px 0; margin-left: 3px; }
.pane h2 button { margin-left: auto; padding-right: 3px; font-size: 6px; }
.pane ul { background: #fff; color: #333; width: 67px; height: 134px; flex: none; margin-top: 4px; overflow: hidden; display: grid; grid-auto-rows: calc(134px / 17.500); }
.pane li { width: 52px; padding: 0 1px 0 3px; display: flex; justify-content: space-between; align-items: center; white-space: nowrap; }
.pane li.on { outline: 1px solid #4a70b0; outline-offset: -1px; }
.pane label { display: flex; gap: 1px; margin-top: 2px; width: 66px; }
.pane input { width: 5px; height: 5px; background: #333; flex: none; }
.acts { display: flex; gap: 3px; margin-top: auto; color: #2f5c90; }
.acts button { background: #d0d0d0; width: 10px; height: 10px; }
.acts .opt { flex: 1; color: #333; }

.dialog { position: absolute; left: 43.400%; top: 78px; width: 236px; background: #f0f0f0; color: #333; padding: 0 3px 3px 2px; box-shadow: 0 1px 6px rgba(0, 0, 0, 0.5); }
.dialog header { background: #fff; margin: 0 -3px 0 -2px; height: 13px; display: flex; align-items: center; gap: 12px; padding: 0 6px 0 3px; }
.dialog header span { margin-left: auto; font-size: 6px; }
.dialog header svg { width: 5px; height: 5px; }
.dialog h3 { font-size: 4px; font-weight: normal; line-height: 8px; display: flex; align-items: center; gap: 2px; }
.dialog h3::after { content: ""; flex: 1; border-top: 1px solid #ddd; }
.dialog .pick { background: #fff; border: 1px solid #d0d0d0; height: 8px; }
.dialog .pick svg { width: 6px; height: 6px; padding: 1px; background: #ddd; }
.dialog .pick select, .dialog .pick input { padding-left: 1px; }
.fields { display: grid; grid-template-columns: 76px 1fr; row-gap: 1px; padding-left: 3px; line-height: 8px; margin-top: 1px; white-space: nowrap; }
.fields .off, .dialog .off select { color: #999; opacity: 1; }
.dialog .pick.off { background: #eee; }
.fmt { display: flex; align-items: center; gap: 1px; padding-left: 3px; margin-top: 1px; height: 9px; }
.fmt button { width: 9px; height: 8px; }
.fmt .on { background: #b9d9f0; }
.f1 { width: 53px; }
.f2 { width: 22px; margin-right: 2px; }
.f3 { width: 50px; margin-left: 6px; }
.f3 select { text-align: center; }
.aligns { gap: 3px; margin-top: 4px; color: #777; }
.aligns hr { border: 0; border-left: 1px solid #ccc; height: 7px; margin: 0 2px; }
.aligns .push { margin-left: auto; }
.aligns button:last-child { margin-right: 28px; }
.hv { stroke-width: 5; }
.sample { background: #fff; border: 1px solid #aaa; margin: 2px 0 0 3px; height: 59px; overflow: hidden; padding: 4px 0 0 9px; font-family: "Liberation Serif", serif; }
.sample p { color: #b5b5b5; font-size: 5px; height: 12px; }
.sample div { display: flex; gap: 5px; font-size: 8px; line-height: 8px; padding-top: 10px; color: #222; white-space: nowrap; }
.desc { display: flex; justify-content: space-between; border: 1px solid #ddd; margin: 1px 0 0 3px; height: 22px; padding-left: 1px; line-height: 5px; }
.desc p { padding-left: 4px; }
.sb { display: flex; flex-direction: column; justify-content: space-between; align-items: center; width: 7px; }
.sb svg { width: 4px; height: 4px; }
.sb i { width: 5px; height: 6px; background: #c4c4c4; }
.opts { display: flex; gap: 4px; height: 7px; align-items: center; white-space: nowrap; }
.desc + .opts { margin-top: 3px; }
.opts label { display: flex; align-items: center; gap: 2px; }
.opts input { width: 5px; height: 5px; border: 1px solid #777; background: #fff; }
.opts input[type="radio"] { border-radius: 50%; }
.opts input[type="radio"]:checked { background: #444; }
.opts input[type="checkbox"]:checked { background: linear-gradient(135deg, #fff 40%, #444 40% 60%, #fff 60%); }
.btns { display: flex; gap: 4px; margin-top: 4px; }
.btns button { width: 28px; height: 9px; background: #dedede; border: 1px solid #d0d0d0; }
.btns .on { background: #b9d9f0; border-color: #4a88c0; margin-right: auto; }

.drop { position: absolute; left: 43.700%; top: 280px; width: 70px; height: 80px; background: #f0f0f0; border: 1px solid #c4c4c4; display: grid; padding-left: 12px; color: #555; }
.drop li { display: flex; }
.arrow { position: absolute; fill: #f00; stroke: #2f528f; stroke-width: 1; }
.a1 { left: 91.100%; top: 32px; width: 58px; height: 40px; }
.a2 { left: 75.300%; top: 73px; width: 27px; height: 36px; }
.a3 { left: 35%; top: 257px; width: 60px; height: 41px; }
```
